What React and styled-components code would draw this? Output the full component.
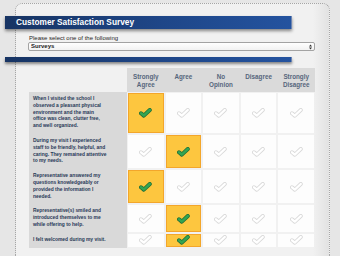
import React from "react";
import styled, { createGlobalStyle } from "styled-components";

const Global = createGlobalStyle`
  html, body { margin: 0; padding: 0; overflow: hidden; background: #e6e6e6; }
  body { font-family: "Liberation Sans", Arial, sans-serif; }
`;

const Page = styled.div`
  width: 340px;
  height: 256px;
  box-sizing: border-box;
  padding: 3px 0 0 15px;
`;

const Frame = styled.div`
  width: 315px;
  height: 253px;
  box-sizing: border-box;
  border: 1px dotted #a6a6a6;
  border-bottom: none;
  border-radius: 7px 7px 0 0;
  background: linear-gradient(to right, #f1f1f1 0, #f1f1f1 calc(100% - 16px), #e2e2e2 100%);
  padding-top: 12px;
`;

const Ribbon = styled.div`
  margin-left: -11px;
  width: 287px;
  height: ${(p) => p.$h}px;
  box-sizing: border-box;
  background: linear-gradient(to right, #173463 0%, #1e4688 55%, #24539f 100%);
  box-shadow: 0 2px 3px rgba(0, 0, 0, 0.45);
  border-right: 1px solid #6d86b3;
  color: #fff;
  font-weight: bold;
  font-size: 8.3px;
  line-height: ${(p) => p.$h}px;
  padding-left: 11px;
  margin-top: ${(p) => p.$mt || 0}px;
`;

const Form = styled.div`
  margin: 5px 0 0 12px;
  width: 287px;
`;

const Label = styled.div`
  font-size: 6px;
  line-height: 8px;
  color: #262626;
  padding-left: 1px;
`;

const SelectWrap = styled.div`
  position: relative;
  height: 9px;
`;

const Select = styled.select`
  appearance: none;
  -webkit-appearance: none;
  display: block;
  width: 100%;
  height: 9px;
  box-sizing: border-box;
  margin: 0;
  padding: 0 0 0 2px;
  border: 1px solid #a3a3a3;
  border-radius: 2px;
  background: linear-gradient(#ffffff, #f2f2f2);
  font-family: "Liberation Sans", Arial, sans-serif;
  font-weight: bold;
  font-size: 6px;
  line-height: 7px;
  color: #222;
  outline: none;
`;

const Arrows = styled.svg`
  position: absolute;
  right: 3px;
  top: 1.5px;
  pointer-events: none;
`;

const Table = styled.div`
  margin: 6px 0 0 13px;
  width: 286px;
  display: grid;
  grid-template-columns: 98px repeat(5, 1fr);
`;

const Spacer = styled.div``;

const HeadCell = styled.div`
  height: 24px;
  box-sizing: border-box;
  background: #dadada;
  padding-top: 4.5px;
  text-align: center;
  font-weight: bold;
  font-size: 6.3px;
  line-height: 8px;
  color: #56667c;
  white-space: pre-line;
`;

const Question = styled.div`
  background: #d9d9d9;
  padding: 4px 2px 4px 4px;
  font-weight: bold;
  font-size: 4.9px;
  line-height: 6.8px;
  color: #283857;
  white-space: pre-line;
`;

const Answer = styled.div`
  margin: 1px;
  display: flex;
  align-items: center;
  justify-content: center;
  box-sizing: border-box;
  background: ${(p) => (p.$on ? "#fdc63f" : "#fdfdfd")};
  border: 1px solid ${(p) => (p.$on ? "#f3a62b" : "#fdfdfd")};
`;

const Check = ({ on }) => (
  <svg width="13" height="10" viewBox="0 0 13 10">
    <path
      d="M2 5.3 L4.8 7.6 L10.8 2"
      fill="none"
      stroke={on ? "#1f6b35" : "#d9d9d9"}
      strokeWidth="4"
      strokeLinecap="round"
      strokeLinejoin="round"
    />
    <path
      d="M2 5.3 L4.8 7.6 L10.8 2"
      fill="none"
      stroke={on ? "#34a551" : "#ffffff"}
      strokeWidth={on ? 2.6 : 2.3}
      strokeLinecap="round"
      strokeLinejoin="round"
    />
  </svg>
);

const headers = ["Strongly\nAgree", "Agree", "No\nOpinion", "Disagree", "Strongly\nDisagree"];

const rows = [
  {
    text: "When I visited the school I\nobserved a pleasant physical\nenvironment and the main\noffice was clean, clutter free,\nand well organized.",
    pick: 0,
  },
  {
    text: "During my visit I experienced\nstaff to be friendly, helpful, and\ncaring. They remained attentive\nto my needs.",
    pick: 1,
  },
  {
    text: "Representative answered my\nquestions knowledgeably or\nprovided the information I\nneeded.",
    pick: 0,
  },
  {
    text: "Representative(s) smiled and\nintroduced themselves to me\nwhile offering to help.",
    pick: 1,
  },
  { text: "I felt welcomed during my visit.", pick: 1 },
];

export default function App() {
  return (
    <>
      <Global />
      <Page>
        <Frame>
          <Ribbon $h={13}>Customer Satisfaction Survey</Ribbon>
          <Form>
            <Label>Please select one of the following</Label>
            <SelectWrap>
              <Select defaultValue="surveys">
                <option value="surveys">Surveys</option>
              </Select>
              <Arrows width="3" height="6" viewBox="0 0 3 6">
                <path d="M0 2.4 L1.5 0.4 L3 2.4 Z M0 3.6 L1.5 5.6 L3 3.6 Z" fill="#333" />
              </Arrows>
            </SelectWrap>
          </Form>
          <Ribbon $h={5} $mt={6} />
          <Table>
            <Spacer />
            {headers.map((h) => (
              <HeadCell key={h}>{h}</HeadCell>
            ))}
            {rows.map((r, i) => (
              <React.Fragment key={i}>
                <Question>{r.text}</Question>
                {headers.map((h, j) => (
                  <Answer key={h} $on={r.pick === j}>
                    <Check on={r.pick === j} />
                  </Answer>
                ))}
              </React.Fragment>
            ))}
          </Table>
        </Frame>
      </Page>
    </>
  );
}
